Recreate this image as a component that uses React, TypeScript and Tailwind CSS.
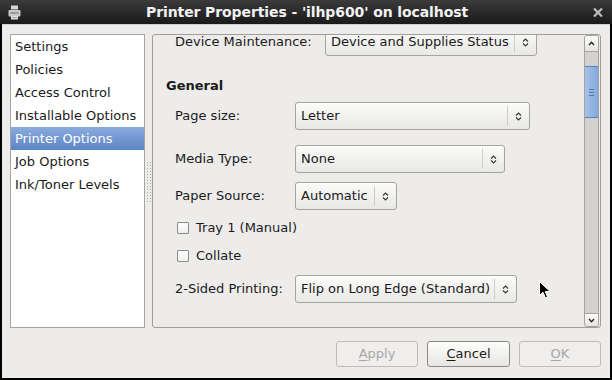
const listItems = [
  "Settings",
  "Policies",
  "Access Control",
  "Installable Options",
  "Printer Options",
  "Job Options",
  "Ink/Toner Levels",
];

function Arrows() {
  return (
    <svg width="7" height="11" viewBox="0 0 7 11" fill="none">
      <path d="M1 4.5 L3.5 2 L6 4.5" stroke="#3a3a3a" strokeWidth="1.2" />
      <path d="M1 6.5 L3.5 9 L6 6.5" stroke="#3a3a3a" strokeWidth="1.2" />
    </svg>
  );
}

function Combo({ text, width }: { text: string; width: string }) {
  return (
    <div
      className={`${width} h-[28px] flex items-center rounded-[3px] border border-[#a3a3a1] bg-gradient-to-b from-[#fbfbfa] to-[#e9e8e6] shadow-[inset_0_1px_0_#ffffff]`}
    >
      <span className="flex-1 pl-[5px] whitespace-nowrap overflow-hidden">{text}</span>
      <span className="w-px h-[20px] bg-[#cdccca]" />
      <span className="w-[21px] flex justify-center">
        <Arrows />
      </span>
    </div>
  );
}

function Check({ label }: { label: string }) {
  return (
    <div className="h-[16px] flex items-center pl-[24px] gap-[7px]">
      <span className="w-[12px] h-[12px] border border-[#8c8c8a] rounded-[1px] bg-gradient-to-b from-[#ffffff] to-[#efefee]" />
      <span>{label}</span>
    </div>
  );
}

function Btn({ label, hot, disabled }: { label: string; hot: string; disabled?: boolean }) {
  const rest = label.slice(1);
  return (
    <button
      className={
        disabled
          ? "w-[82px] h-[26px] rounded-[3px] border border-[#bdbcba] bg-[#efeeed] text-[#a6a6a4]"
          : "w-[83px] h-[26px] rounded-[3px] border border-[#8a8988] bg-gradient-to-b from-[#fdfdfc] to-[#e7e6e4] text-[#1a1a1a]"
      }
    >
      <span className="underline underline-offset-2">{hot}</span>
      {rest}
    </button>
  );
}

export default function App() {
  return (
    <div className="relative w-[612px] h-[380px] bg-black flex flex-col font-['DejaVu_Sans',sans-serif] text-[13px] text-[#1a1a1a] overflow-hidden">
      {/* title bar */}
      <div className="h-[24px] flex items-center bg-gradient-to-b from-[#3b3b3b] to-[#1a1a1a] px-[8px]">
        <svg width="13" height="15" viewBox="0 0 13 15">
          <rect x="3" y="0.5" width="7" height="4" fill="#d6d6d6" />
          <rect x="0.5" y="5" width="12" height="6.5" rx="1" fill="#c9c9c9" />
          <rect x="2.5" y="7.5" width="8" height="1" fill="#6a6a6a" />
          <rect x="3" y="11" width="7" height="3.5" fill="#e2e2e2" />
          <rect x="4" y="12.3" width="5" height="0.8" fill="#8a8a8a" />
        </svg>
        <div className="flex-1 text-center font-bold text-[14px] text-[#f2f2f2] tracking-[-0.1px]">
          Printer Properties - 'ilhp600' on localhost
        </div>
        <svg width="10" height="9" viewBox="0 0 10 9" className="mr-[1px]">
          <path d="M1 0.5 L9 8.5 M9 0.5 L1 8.5" stroke="#bdbdbd" strokeWidth="2.2" />
        </svg>
      </div>

      {/* body */}
      <div className="flex-1 mx-[2px] mb-[2px] bg-[#edeceb] border-t border-[#cfd3d8] pt-[9px] pl-[8px] pr-[9px] flex flex-col">
        <div className="h-[294px] flex">
          {/* list */}
          <div className="w-[135px] border border-[#a5a5a3] bg-white">
            {listItems.map((it) =>
              it === "Printer Options" ? (
                <div
                  key={it}
                  className="h-[23px] flex items-center pl-[4px] text-white bg-gradient-to-b from-[#8aabdd] to-[#5d85c5]"
                >
                  {it}
                </div>
              ) : (
                <div key={it} className="h-[23px] flex items-center pl-[4px]">
                  {it}
                </div>
              )
            )}
          </div>

          {/* pane handle */}
          <div className="w-[7px] flex items-center justify-center">
            <div className="flex flex-col gap-[2px] pt-[1px]">
              {Array.from({ length: 14 }).map((_, i) => (
                <div key={i} className="flex gap-[2px]">
                  <span className="w-px h-px bg-[#a9a9a7]" />
                  <span className="w-px h-px bg-[#a9a9a7]" />
                </div>
              ))}
            </div>
          </div>

          {/* frame */}
          <div className="flex-1 flex border border-[#9f9e9c] rounded-[3px] overflow-hidden">
            <div className="flex-1 overflow-hidden">
              <div className="-mt-[7px] flex flex-col">
                <div className="h-[28px] flex items-center">
                  <span className="w-[172px] pl-[22px] whitespace-nowrap">Device Maintenance:</span>
                  <Combo text="Device and Supplies Status" width="w-[212px]" />
                </div>
                <div className="mt-[22px] h-[16px] leading-[16px] pl-[13px] font-bold">General</div>
                <div className="mt-[8px] h-[28px] flex items-center">
                  <span className="w-[142px] pl-[22px]">Page size:</span>
                  <Combo text="Letter" width="w-[235px]" />
                </div>
                <div className="mt-[15px] h-[28px] flex items-center">
                  <span className="w-[142px] pl-[22px]">Media Type:</span>
                  <Combo text="None" width="w-[210px]" />
                </div>
                <div className="mt-[9px] h-[28px] flex items-center">
                  <span className="w-[142px] pl-[22px]">Paper Source:</span>
                  <Combo text="Automatic" width="w-[102px]" />
                </div>
                <div className="mt-[10px]">
                  <Check label="Tray 1 (Manual)" />
                </div>
                <div className="mt-[12px]">
                  <Check label="Collate" />
                </div>
                <div className="mt-[11px] h-[28px] flex items-center">
                  <span className="w-[142px] pl-[22px]">2-Sided Printing:</span>
                  <Combo text="Flip on Long Edge (Standard)" width="w-[222px]" />
                </div>
              </div>
            </div>

            {/* scrollbar */}
            <div className="w-[15px] my-[0px] mr-[1px] flex flex-col border border-[#a3a3a1] rounded-[3px] bg-[#d3d2d0] overflow-hidden">
              <div className="h-[16px] flex items-center justify-center border-b border-[#a3a3a1] bg-gradient-to-b from-[#fbfbfa] to-[#e6e5e3]">
                <svg width="7" height="5" viewBox="0 0 7 5" fill="none">
                  <path d="M1 4 L3.5 1.2 L6 4" stroke="#222" strokeWidth="1.3" />
                </svg>
              </div>
              <div className="h-[14px]" />
              <div className="h-[52px] mx-[-1px] flex flex-col items-center justify-center gap-[2px] border border-[#5b80bf] bg-gradient-to-r from-[#a7c2ea] to-[#84a8dc]">
                <span className="w-[5px] h-px bg-[#4f74b3]" />
                <span className="w-[5px] h-px bg-[#4f74b3]" />
                <span className="w-[5px] h-px bg-[#4f74b3]" />
              </div>
              <div className="flex-1" />
              <div className="h-[13px] flex items-center justify-center border-t border-[#a3a3a1] bg-gradient-to-b from-[#fbfbfa] to-[#e6e5e3]">
                <svg width="7" height="5" viewBox="0 0 7 5" fill="none">
                  <path d="M1 1 L3.5 3.8 L6 1" stroke="#222" strokeWidth="1.3" />
                </svg>
              </div>
            </div>
          </div>
        </div>

        {/* buttons */}
        <div className="mt-[13px] flex justify-end gap-[9px] pr-0">
          <Btn label="Apply" hot="A" disabled />
          <Btn label="Cancel" hot="C" />
          <Btn label="OK" hot="O" disabled />
        </div>
      </div>

      {/* mouse pointer */}
      <svg className="absolute left-[539px] top-[281px]" width="12" height="18" viewBox="0 0 12 18">
        <path
          d="M0.5 0.5 L0.5 14.5 L4 11.2 L6.5 17 L8.6 16.1 L6.2 10.5 L11 10.5 Z"
          fill="#000"
          stroke="#fff"
          strokeWidth="1"
          strokeLinejoin="round"
        />
      </svg>
    </div>
  );
}
